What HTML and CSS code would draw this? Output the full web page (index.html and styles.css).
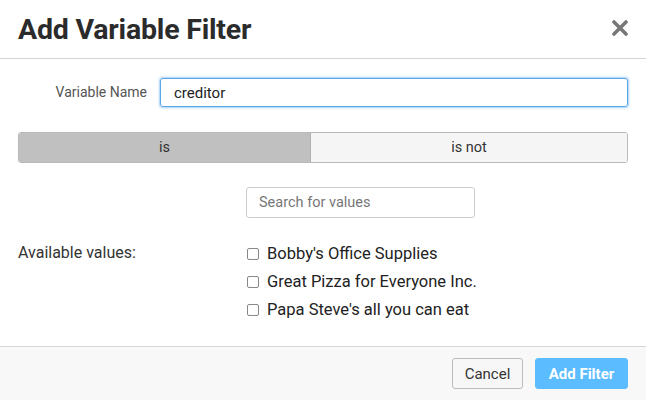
FILE: index.html
```html
<!DOCTYPE html>
<html>
<head>
<meta charset="utf-8">
<link rel="stylesheet" href="styles.css">
</head>
<body>
<div class="modal">
  <header class="modal-header">
    <h1 class="title">Add Variable Filter</h1>
    <svg class="close" width="16" height="16" viewBox="0 0 16 16"><path d="M2 2 L14 14 M14 2 L2 14" stroke="#777" stroke-width="3.6" stroke-linecap="round"/></svg>
  </header>
  <div class="modal-body">
    <div class="field-row">
      <label class="field-label">Variable Name</label>
      <div class="name-input">creditor</div>
    </div>
    <div class="toggle">
      <div class="toggle-opt active">is</div>
      <div class="toggle-opt">is not</div>
    </div>
    <div class="search-row">
      <div class="search-input">Search for values</div>
    </div>
    <div class="values-row">
      <div class="values-label">Available values:</div>
      <ul class="values-list">
        <li><span class="cb"></span>Bobby's Office Supplies</li>
        <li><span class="cb"></span>Great Pizza for Everyone Inc.</li>
        <li><span class="cb"></span>Papa Steve's all you can eat</li>
      </ul>
    </div>
  </div>
  <footer class="modal-footer">
    <button class="btn btn-cancel">Cancel</button>
    <button class="btn btn-primary">Add Filter</button>
  </footer>
</div>
</body>
</html>
```
FILE: styles.css
```css
* { box-sizing: border-box; }
html, body { margin: 0; padding: 0; background: #fff; }
body { font-family: Roboto, "Liberation Sans", sans-serif; color: #333; width: 646px; height: 400px; overflow: hidden; }
.modal { display: flex; flex-direction: column; height: 400px; }
.modal-header { height: 59px; border-bottom: 1px solid #d4d4d4; display: flex; align-items: center; justify-content: space-between; padding: 0 18px 0 18px; }
.title { margin: 0; font-size: 28.5px; font-weight: 700; color: #2b2b2b; letter-spacing: -0.2px; }
.close { display: block; margin-top: -3px; }
.modal-body { flex: 1; padding: 19px 18px 0 18px; }
.field-row { display: flex; align-items: center; }
.field-label { width: 129px; text-align: right; font-size: 14px; color: #555; margin-top: -2px; }
.name-input { flex: 1; margin-left: 13px; height: 29px; border: 1px solid #5aa7e8; border-radius: 3px; box-shadow: 0 0 2px 1px rgba(80,160,240,0.5); padding: 0 13px; display: flex; align-items: center; font-size: 15px; color: #222; }
.toggle { display: flex; margin-top: 25px; height: 31px; border: 1px solid #b9b9b9; border-radius: 3px; overflow: hidden; }
.toggle-opt { display: flex; align-items: center; justify-content: center; font-size: 14.5px; color: #333; background: #f5f5f5; }
.toggle-opt.active { width: 292px; background: #c0c0c0; border-right: 1px solid #b0b0b0; }
.toggle-opt:last-child { flex: 1; }
.search-row { display: flex; margin-top: 24px; padding-left: 228px; }
.search-input { width: 229px; height: 31px; border: 1px solid #ccc; border-radius: 3px; display: flex; align-items: center; padding: 0 12px; font-size: 14.5px; color: #777; }
.values-row { display: flex; margin-top: 21px; }
.values-label { width: 229px; font-size: 16px; color: #333; padding-top: 4px; }
.values-list { list-style: none; margin: 0; padding: 0; }
.values-list li { display: flex; align-items: center; height: 28px; font-size: 16.5px; color: #222; }
.cb { width: 12px; height: 12px; border: 1px solid #888; border-radius: 2px; margin-right: 8px; margin-top: 2px; background: #fff; }
.modal-footer { height: 54px; background: #f8f8f9; border-top: 1px solid #d6d6d6; display: flex; align-items: center; justify-content: flex-end; padding: 0 18px; gap: 12px; }
.btn { font-family: inherit; height: 31px; border-radius: 3px; font-size: 15px; padding: 0 13px; }
.btn-cancel { width: 71px; padding: 0; background: #f7f7f7; border: 1px solid #bbb; color: #333; }
.btn-primary { width: 93px; padding: 0; background: #5bbcff; border: 1px solid #5bbcff; color: #fff; font-weight: 700; }
```
